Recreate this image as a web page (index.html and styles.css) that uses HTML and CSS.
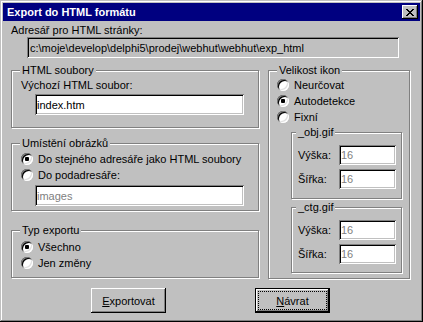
FILE: index.html
```html
<!DOCTYPE html>
<html lang="cs">
<head>
    <meta charset="UTF-8">
    <title>Export do HTML formátu</title>
    <link rel="stylesheet" href="styles.css">
</head>
<body>
    <div class="window">
        <div class="titlebar">
            <span class="title">Export do HTML formátu</span>
            <button class="close" title="Zavřít">
                <svg width="8" height="7" viewBox="0 0 8 7" shape-rendering="crispEdges">
                    <path fill="#000" d="M0 0h2v1H0z M6 0h2v1H6z M1 1h2v1H1z M5 1h2v1H5z M2 2h4v1H2z M3 3h2v1H3z M2 4h4v1H2z M1 5h2v1H1z M5 5h2v1H5z M0 6h2v1H0z M6 6h2v1H6z"/>
                </svg>
            </button>
        </div>

        <div class="body">
            <label class="caption">Adresář pro HTML stránky:</label>
            <input type="text" class="edit edit-path" readonly value="c:\moje\develop\delphi5\prodej\webhut\webhut\exp_html">

            <div class="columns">
                <div class="col-left">
                    <fieldset class="group group-files">
                        <legend>HTML soubory</legend>
                        <label class="field-label">Výchozí HTML soubor:</label>
                        <input type="text" class="edit edit-wide" value="index.htm">
                    </fieldset>

                    <fieldset class="group group-images">
                        <legend>Umístění obrázků</legend>
                        <label class="option"><input type="radio" class="radio" name="img" checked>Do stejného adresáře jako HTML soubory</label>
                        <label class="option"><input type="radio" class="radio" name="img">Do podadresáře:</label>
                        <input type="text" class="edit edit-wide" value="images" disabled>
                    </fieldset>

                    <fieldset class="group group-type">
                        <legend>Typ exportu</legend>
                        <label class="option"><input type="radio" class="radio" name="typ" checked>Všechno</label>
                        <label class="option"><input type="radio" class="radio" name="typ">Jen změny</label>
                    </fieldset>
                </div>

                <fieldset class="group group-icons">
                    <legend>Velikost ikon</legend>
                    <label class="option"><input type="radio" class="radio" name="ikon">Neurčovat</label>
                    <label class="option"><input type="radio" class="radio" name="ikon" checked>Autodetekce</label>
                    <label class="option"><input type="radio" class="radio" name="ikon">Fixní</label>

                    <fieldset class="group sub">
                        <legend>_obj.gif</legend>
                        <div class="size-row">
                            <label>Výška:</label>
                            <input type="text" class="edit edit-small" value="16" disabled>
                        </div>
                        <div class="size-row">
                            <label>Šířka:</label>
                            <input type="text" class="edit edit-small" value="16" disabled>
                        </div>
                    </fieldset>

                    <fieldset class="group sub">
                        <legend>_ctg.gif</legend>
                        <div class="size-row">
                            <label>Výška:</label>
                            <input type="text" class="edit edit-small" value="16" disabled>
                        </div>
                        <div class="size-row">
                            <label>Šířka:</label>
                            <input type="text" class="edit edit-small" value="16" disabled>
                        </div>
                    </fieldset>
                </fieldset>
            </div>

            <div class="actions">
                <button class="btn"><u>E</u>xportovat</button>
                <button class="btn btn-default"><span class="focus"><u>N</u>ávrat</span></button>
            </div>
        </div>
    </div>
</body>
</html>
```

FILE: styles.css
```css
body {
    margin: 0;
    background: #c0c0c0;
}
.window {
    width: 423px;
    height: 322px;
    box-sizing: border-box;
    padding: 3px;
    display: flex;
    flex-direction: column;
    background: #c0c0c0;
    box-shadow: inset -1px -1px #000, inset 1px 1px #c0c0c0, inset -2px -2px #808080, inset 2px 2px #fff;
    font: 11px "Liberation Sans", Arial, sans-serif;
    color: #000;
}
.titlebar {
    height: 18px;
    display: flex;
    align-items: center;
    justify-content: space-between;
    padding: 0 2px 0 4px;
    background: #000080;
    color: #fff;
}
.title {
    font-weight: bold;
    line-height: 18px;
}
.close {
    width: 16px;
    height: 14px;
    padding: 0;
    border: 0;
    display: flex;
    align-items: center;
    justify-content: center;
    background: #c0c0c0;
    box-shadow: inset -1px -1px #000, inset 1px 1px #fff, inset -2px -2px #808080;
}
.body {
    flex: 1;
    display: flex;
    flex-direction: column;
    padding: 3px 8px 0;
}
.caption {
    display: block;
    line-height: 13px;
}
.edit {
    box-sizing: border-box;
    height: 21px;
    padding: 0 2px;
    border: 0;
    outline: none;
    font: inherit;
    color: #000;
    background: #fff;
    box-shadow: inset 1px 1px #808080, inset -1px -1px #fff, inset 2px 2px #000, inset -2px -2px #c0c0c0;
}
.edit:disabled {
    color: #808080;
    background: #fff;
}
.edit-path {
    width: 372px;
    margin-left: 16px;
    padding-left: 3px;
    background: #c0c0c0;
}
.columns {
    display: flex;
    align-items: flex-start;
    gap: 9px;
    margin-top: 6px;
}
.col-left {
    width: 248px;
    display: flex;
    flex-direction: column;
}

/* group boxes */
.group {
    box-sizing: border-box;
    min-width: 0;
    margin: 0;
    padding: 0 8px;
    border: 1px solid #808080;
    box-shadow: inset 1px 1px #fff, 1px 1px #fff;
}
.group legend {
    padding: 0 2px;
    line-height: 13px;
    background: #c0c0c0;
}
.group-files {
    padding-top: 2px;
    padding-bottom: 12px;
}
.group-images {
    margin-top: 9px;
    padding-top: 1px;
    padding-bottom: 4px;
}
.group-type {
    margin-top: 13px;
    padding-top: 2px;
    padding-bottom: 6px;
}
.group-icons {
    width: 142px;
    padding-bottom: 5px;
}
.field-label {
    display: block;
    line-height: 13px;
    margin-left: 1px;
}
.edit-wide {
    display: block;
    width: 209px;
    margin: 2px 0 0 15px;
}

/* radio buttons */
.option {
    display: flex;
    align-items: center;
    gap: 5px;
    height: 16px;
    margin-left: 1px;
}
.group-icons > .option {
    margin-left: 0;
}
.radio {
    appearance: none;
    flex: none;
    width: 12px;
    height: 12px;
    margin: 0;
    border-radius: 50%;
    background: #fff;
    box-shadow: inset 1px 1px #808080, inset -1px -1px #fff, inset 2px 2px #000, inset -2px -2px #dfdfdf;
}
.radio:checked {
    background: radial-gradient(circle, #000 0 2px, #fff 2.5px);
}

/* icon size sub groups */
.sub {
    width: 111px;
    margin: 1px 0 0 14px;
    padding: 6px 5px 9px 4px;
}
.sub + .sub {
    margin-top: 2px;
    padding-bottom: 8px;
}
.size-row {
    display: grid;
    grid-template-columns: 43px 57px;
    align-items: center;
}
.size-row + .size-row {
    margin-top: 4px;
}
.size-row label {
    padding-left: 2px;
}
.edit-small {
    width: 57px;
    height: 20px;
}

/* buttons */
.actions {
    display: flex;
    justify-content: center;
    gap: 89px;
    margin-top: 9px;
    padding-right: 2px;
}
.btn {
    box-sizing: border-box;
    width: 75px;
    height: 25px;
    padding: 0;
    border: 0;
    font: inherit;
    color: #000;
    background: #c0c0c0;
    box-shadow: inset -1px -1px #000, inset 1px 1px #fff, inset -2px -2px #808080;
}
.btn-default {
    border: 1px solid #000;
    padding: 2px;
}
.btn-default .focus {
    display: flex;
    height: 100%;
    box-sizing: border-box;
    align-items: center;
    justify-content: center;
    border: 1px dotted #000;
}
```
